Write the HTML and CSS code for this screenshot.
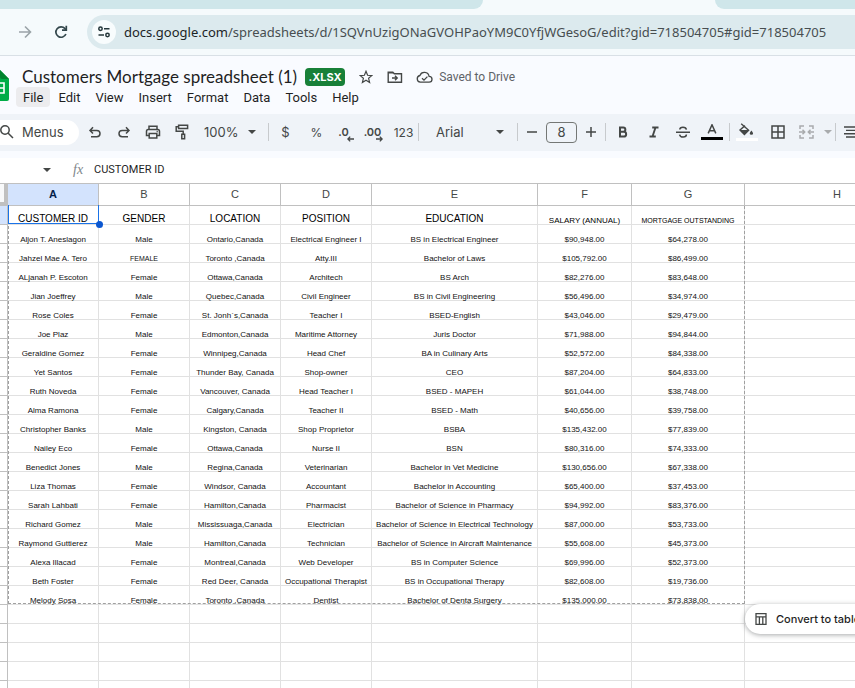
FILE: index.html
```html
<!DOCTYPE html>
<html lang="en">
<head>
    <meta charset="utf-8">
    <title>Customers Mortgage spreadsheet (1)</title>
    <link rel="stylesheet" href="styles.css">
</head>
<body>
<div class="tabs"><div class="tab-left"></div><div class="tab-right"></div></div>

<div class="browser">
    <button class="nav" aria-label="Forward"><svg width="14" height="14" viewBox="0 0 14 14" fill="none" stroke="#9aa3a8" stroke-width="1.6"><path d="M1 7h11M7 1.5L12.5 7 7 12.5"/></svg></button>
    <button class="nav reload" aria-label="Reload"><svg width="14" height="14" viewBox="0 0 14 14" fill="none" stroke="#33474c" stroke-width="1.7"><path d="M11.9 9A5.2 5.2 0 1 1 11 3.6L12.4 5"/><path d="M12.3 .8v4.4H8"/></svg></button>
    <div class="address">
        <button class="site" aria-label="Site information"><svg width="12" height="12" viewBox="0 0 12 12" fill="none" stroke="#24363a" stroke-width="1.5"><circle cx="2.5" cy="2.8" r="1.7"/><path d="M6 2.8h5.5M.5 9h5.5"/><circle cx="9.5" cy="9" r="1.7"/></svg></button>
        <a class="url" href="#"><b>docs.google.com</b>/spreadsheets/d/1SQVnUzigONaGVOHPaoYM9C0YfjWGesoG/edit?gid=718504705#gid=718504705</a>
    </div>
</div>

<header class="docs">
    <svg class="logo" width="9" height="32" viewBox="0 0 9 32"><path d="M0 0l9 9v20a2 2 0 0 1-2 2H0z" fill="#00ac47"/><path d="M0 0l9 9H2a2 2 0 0 1-2-2z" fill="#00832d"/><path d="M0 13h4v10H0M0 18h4" fill="none" stroke="#fff" stroke-width="1.6"/></svg>
    <div class="heading">
        <div class="title-row">
            <h1>Customers Mortgage spreadsheet (1)</h1>
            <span class="badge">.XLSX</span>
            <button class="icon star" aria-label="Star"><svg width="14" height="14" viewBox="0 0 14 14" fill="none" stroke="#444746" stroke-width="1.2"><path d="M7 1.3l1.6 4 4.2.3-3.2 2.7 1 4.2L7 10.2l-3.6 2.3 1-4.2L1.2 5.6l4.2-.3z"/></svg></button>
            <button class="icon" aria-label="Move"><svg width="16" height="14" viewBox="0 0 16 14" fill="none" stroke="#444746" stroke-width="1.4"><path d="M1.2 2.2h4.6l1.5 1.6h7.2v8.4H1.2z"/><path d="M1 2.8h5"/><path d="M5 8h5M8 5.8L10.2 8 8 10.2"/></svg></button>
            <button class="icon saved" aria-label="Saved to Drive"><svg width="17" height="14" viewBox="0 0 17 14" fill="none" stroke="#444746" stroke-width="1.3"><path d="M4.3 12.2a3.4 3.4 0 0 1-.4-6.7 4.8 4.8 0 0 1 9.2.9 2.9 2.9 0 0 1 0 5.8z"/><path d="M6 8.3l2 1.9 3.4-3.6"/></svg></button>
            <span class="status">Saved to Drive</span>
        </div>
        <nav class="menu">
            <button class="open">File</button>
            <button>Edit</button>
            <button>View</button>
            <button>Insert</button>
            <button>Format</button>
            <button>Data</button>
            <button>Tools</button>
            <button>Help</button>
        </nav>
    </div>
</header>

<div class="toolbar">
    <button class="menus"><svg width="14" height="14" viewBox="0 0 14 14" fill="none" stroke="#444746" stroke-width="1.5"><circle cx="5" cy="5" r="4.2"/><path d="M8 8l5 5"/></svg>Menus</button>
    <button aria-label="Undo"><svg width="14" height="14" viewBox="0 0 14 14" fill="none" stroke="#444746" stroke-width="1.5"><path d="M5 2.2L2 5.4l3 3.2M2.2 5.4h6.6a3.2 3.2 0 0 1 0 6.4H3"/></svg></button>
    <button aria-label="Redo"><svg width="14" height="14" viewBox="0 0 14 14" fill="none" stroke="#444746" stroke-width="1.5"><path d="M9 2.2l3 3.2-3 3.2M11.8 5.4H5.2a3.2 3.2 0 0 0 0 6.4H11"/></svg></button>
    <button aria-label="Print"><svg width="16" height="14" viewBox="0 0 16 14" fill="none" stroke="#444746" stroke-width="1.5"><path d="M4 4V1.2h8V4M4 10.5H1.5V6.4Q1.5 4.5 3.2 4.5h9.6q1.7 0 1.7 1.9v4.1H12"/><path d="M4.2 8.5h7.6v4.4H4.2z"/><path d="M11.6 6.6h1.2"/></svg></button>
    <button aria-label="Paint format"><svg width="14" height="16" viewBox="0 0 14 16" fill="none" stroke="#444746" stroke-width="1.5"><path d="M3.6 1.2h9v3.4h-9zM3.6 2.8H1.2v4.4h7v3"/><path d="M6.8 10.2h2.8v4.6H6.8z"/></svg></button>
    <label class="pick zoom"><select aria-label="Zoom"><option>100%</option></select><svg width="8" height="4" viewBox="0 0 8 4"><path d="M0 0h8L4 4z" fill="#444746"/></svg></label>
    <i class="sep"></i>
    <button class="first">$</button>
    <button class="pct">%</button>
    <button class="dec" aria-label="Decrease decimal places">.0<svg width="7" height="6" viewBox="0 0 7 6" fill="none" stroke="#444746" stroke-width="1.3"><path d="M7 3H1M3.2.6L.9 3l2.3 2.4"/></svg></button>
    <button class="dec" aria-label="Increase decimal places">.00<svg width="7" height="6" viewBox="0 0 7 6" fill="none" stroke="#444746" stroke-width="1.3"><path d="M0 3h6M3.8.6L6.1 3 3.8 5.4"/></svg></button>
    <button class="num">123</button>
    <i class="sep"></i>
    <label class="pick font"><select aria-label="Font"><option>Arial</option></select><svg width="8" height="4" viewBox="0 0 8 4"><path d="M0 0h8L4 4z" fill="#444746"/></svg></label>
    <i class="sep"></i>
    <button class="step" aria-label="Decrease font size"><svg width="10" height="10" viewBox="0 0 10 10"><path d="M0 5h10" stroke="#444746" stroke-width="1.5"/></svg></button>
    <input class="size" type="text" value="8" aria-label="Font size">
    <button class="step" aria-label="Increase font size"><svg width="10" height="10" viewBox="0 0 10 10"><path d="M0 5h10M5 0v10" stroke="#444746" stroke-width="1.5"/></svg></button>
    <i class="sep"></i>
    <button class="first bold" aria-label="Bold"><svg width="10" height="12" viewBox="0 0 10 12" fill="none" stroke="#444746" stroke-width="2"><path d="M2 1.5h3.2a2.1 2.1 0 0 1 0 4.3H2zM2 5.8h3.8a2.3 2.3 0 0 1 0 4.7H2z"/></svg></button>
    <button aria-label="Italic"><svg width="10" height="12" viewBox="0 0 10 12" fill="none" stroke="#444746" stroke-width="1.9"><path d="M3.2 1.5h6.3M.5 10.5h6.3M6.5 1.5l-3 9"/></svg></button>
    <button aria-label="Strikethrough"><svg width="14" height="12" viewBox="0 0 14 12" fill="none" stroke="#444746" stroke-width="1.5"><path d="M0 6.2h14M10.4 3.6C10 .4 3.8.4 3.8 3.6M3.6 8.6c.6 3.4 6.8 3.2 6.8 0"/></svg></button>
    <button class="color" aria-label="Text color"><svg width="22" height="16" viewBox="0 0 22 16" fill="none"><path d="M7.2 9.4L11 .8l3.8 8.6M8.4 6.8h5.2" stroke="#444746" stroke-width="1.5"/><path d="M0 13h22v3H0z" fill="#000"/></svg></button>
    <i class="sep"></i>
    <button class="first" aria-label="Fill color"><svg width="22" height="18" viewBox="0 0 22 18" fill="none"><path d="M5.2.8l7.4 6.4-4.2 4.2L4 7l5-4.4" stroke="#444746" stroke-width="1.4"/><path d="M4 7h8.6l-4.2 4.4z" fill="#444746"/><path d="M15.4 7.6q3.4 4.2 0 4.2t0-4.2" fill="#444746"/><path d="M0 15h22v3H0z" fill="#fff"/></svg></button>
    <button aria-label="Borders"><svg width="14" height="14" viewBox="0 0 14 14" fill="none" stroke="#444746" stroke-width="1.5"><path d="M1 1h12v12H1zM7 1v12M1 7h12"/></svg></button>
    <button aria-label="Merge cells"><svg width="15" height="14" viewBox="0 0 15 14" fill="none" stroke="#a9abad" stroke-width="1.5"><path d="M5 1H1v3M10 1h4v3M5 13H1v-3M10 13h4v-3M0 7h5M15 7h-5M3.5 4.8L5.7 7 3.5 9.2M11.5 4.8L9.3 7l2.2 2.2"/></svg></button>
    <button class="more" aria-label="Merge type"><svg width="8" height="4" viewBox="0 0 8 4"><path d="M0 0h8L4 4z" fill="#a9abad"/></svg></button>
    <i class="sep"></i>
    <button class="align" aria-label="Align"><svg width="14" height="12" viewBox="0 0 14 12" stroke="#444746" stroke-width="1.4"><path d="M0 1h14M2 4.4h10M0 7.8h14M2 11h10"/></svg></button>
</div>

<div class="formula">
    <button class="names" aria-label="Named ranges"><svg width="8" height="4" viewBox="0 0 8 4"><path d="M0 0h8L4 4z" fill="#444746"/></svg></button>
    <label class="fx" for="fx">fx</label>
    <input id="fx" type="text" value="CUSTOMER ID">
</div>

<main class="sheet">
    <table>
        <colgroup><col class="rowno"><col class="m"><col class="m"><col class="m"><col class="m"><col class="e"><col class="f"><col class="g"><col class="h"></colgroup>
        <thead>
            <tr><th class="corner"></th><th class="on">A</th><th>B</th><th>C</th><th>D</th><th>E</th><th>F</th><th>G</th><th>H</th></tr>
        </thead>
        <tbody>
            <tr class="labels"><th class="on"></th><td>CUSTOMER ID</td><td>GENDER</td><td>LOCATION</td><td>POSITION</td><td>EDUCATION</td><td class="salary">SALARY (ANNUAL)</td><td class="small">MORTGAGE OUTSTANDING</td><td></td></tr>
            <tr><th></th><td>Aljon T. Aneslagon</td><td>Male</td><td>Ontario,Canada</td><td>Electrical Engineer I</td><td>BS in Electrical Engineer</td><td>$90,948.00</td><td>$64,278.00</td><td></td></tr>
            <tr><th></th><td>Jahzel Mae A. Tero</td><td class="small">FEMALE</td><td>Toronto ,Canada</td><td>Atty.III</td><td>Bachelor of Laws</td><td>$105,792.00</td><td>$86,499.00</td><td></td></tr>
            <tr><th></th><td>ALjanah P. Escoton</td><td>Female</td><td>Ottawa,Canada</td><td>Architech</td><td>BS Arch</td><td>$82,276.00</td><td>$83,648.00</td><td></td></tr>
            <tr><th></th><td>Jian Joeffrey</td><td>Male</td><td>Quebec,Canada</td><td>Civil Engineer</td><td>BS in Civil Engineering</td><td>$56,496.00</td><td>$34,974.00</td><td></td></tr>
            <tr><th></th><td>Rose Coles</td><td>Female</td><td>St. Jonh`s,Canada</td><td>Teacher I</td><td>BSED-English</td><td>$43,046.00</td><td>$29,479.00</td><td></td></tr>
            <tr><th></th><td>Joe Plaz</td><td>Male</td><td>Edmonton,Canada</td><td>Maritime Attorney</td><td>Juris Doctor</td><td>$71,988.00</td><td>$94,844.00</td><td></td></tr>
            <tr><th></th><td>Geraldine Gomez</td><td>Female</td><td>Winnipeg,Canada</td><td>Head Chef</td><td>BA in Culinary Arts</td><td>$52,572.00</td><td>$84,338.00</td><td></td></tr>
            <tr><th></th><td>Yet Santos</td><td>Female</td><td>Thunder Bay, Canada</td><td>Shop-owner</td><td>CEO</td><td>$87,204.00</td><td>$64,833.00</td><td></td></tr>
            <tr><th></th><td>Ruth Noveda</td><td>Female</td><td>Vancouver, Canada</td><td>Head Teacher I</td><td>BSED - MAPEH</td><td>$61,044.00</td><td>$38,748.00</td><td></td></tr>
            <tr><th></th><td>Alma Ramona</td><td>Female</td><td>Calgary,Canada</td><td>Teacher II</td><td>BSED - Math</td><td>$40,656.00</td><td>$39,758.00</td><td></td></tr>
            <tr><th></th><td>Christopher Banks</td><td>Male</td><td>Kingston, Canada</td><td>Shop Proprietor</td><td>BSBA</td><td>$135,432.00</td><td>$77,839.00</td><td></td></tr>
            <tr><th></th><td>Nailey Eco</td><td>Female</td><td>Ottawa,Canada</td><td>Nurse II</td><td>BSN</td><td>$80,316.00</td><td>$74,333.00</td><td></td></tr>
            <tr><th></th><td>Benedict Jones</td><td>Male</td><td>Regina,Canada</td><td>Veterinarian</td><td>Bachelor in Vet Medicine</td><td>$130,656.00</td><td>$67,338.00</td><td></td></tr>
            <tr><th></th><td>Liza Thomas</td><td>Female</td><td>Windsor, Canada</td><td>Accountant</td><td>Bachelor in Accounting</td><td>$65,400.00</td><td>$37,453.00</td><td></td></tr>
            <tr><th></th><td>Sarah Lahbati</td><td>Female</td><td>Hamilton,Canada</td><td>Pharmacist</td><td>Bachelor of Science in Pharmacy</td><td>$94,992.00</td><td>$83,376.00</td><td></td></tr>
            <tr><th></th><td>Richard Gomez</td><td>Male</td><td>Mississuaga,Canada</td><td>Electrician</td><td>Bachelor of Science in Electrical Technology</td><td>$87,000.00</td><td>$53,733.00</td><td></td></tr>
            <tr><th></th><td>Raymond Guttierez</td><td>Male</td><td>Hamilton,Canada</td><td>Technician</td><td>Bachelor of Science in Aircraft Maintenance</td><td>$55,608.00</td><td>$45,373.00</td><td></td></tr>
            <tr><th></th><td>Alexa Illacad</td><td>Female</td><td>Montreal,Canada</td><td>Web Developer</td><td>BS in Computer Science</td><td>$69,996.00</td><td>$52,373.00</td><td></td></tr>
            <tr><th></th><td>Beth Foster</td><td>Female</td><td>Red Deer, Canada</td><td>Occupational Therapist</td><td>BS in Occupational Therapy</td><td>$82,608.00</td><td>$19,736.00</td><td></td></tr>
            <tr><th></th><td>Melody Sosa</td><td>Female</td><td>Toronto ,Canada</td><td>Dentist</td><td>Bachelor of Denta Surgery</td><td>$135,000.00</td><td>$73,838.00</td><td></td></tr>
            <tr><th></th><td></td><td></td><td></td><td></td><td></td><td></td><td></td><td></td></tr>
            <tr><th></th><td></td><td></td><td></td><td></td><td></td><td></td><td></td><td></td></tr>
            <tr><th></th><td></td><td></td><td></td><td></td><td></td><td></td><td></td><td></td></tr>
            <tr><th></th><td></td><td></td><td></td><td></td><td></td><td></td><td></td><td></td></tr>
            <tr><th></th><td></td><td></td><td></td><td></td><td></td><td></td><td></td><td></td></tr>
        </tbody>
    </table>
    <div class="range"></div>
    <div class="cursor"></div>
    <button class="convert"><svg width="12" height="12" viewBox="0 0 12 12" fill="none" stroke="#444746" stroke-width="1.3"><path d="M1 .7h10v10.6H1zM1 3.8h10M4.4 3.8v7.5M7.8 3.8v7.5"/></svg>Convert to table</button>
</main>
</body>
</html>
```
FILE: styles.css
```css
*{ margin:0; padding:0; box-sizing:border-box}
html{ height:100%}
body{
    height:100%;
    display:flex; flex-direction:column;
    overflow:hidden;
    background:#fff; color:#1f1f1f;
    font-family:Inter, "Liberation Sans", sans-serif;
}
button, input, select{
    border:0; background:none; outline:0;
    font:inherit; color:inherit;
}
button{
    display:flex; align-items:center; justify-content:center;
    white-space:nowrap; cursor:pointer;
}
svg{ display:block; flex:none}

/* browser chrome */
.tabs{
    display:flex; justify-content:space-between; flex:none;
    height:9px;
    background:#f5fafc;
}
.tab-left, .tab-right{ background:#cfe6ea}
.tab-left{ width:483px; border-bottom-right-radius:9px}
.tab-right{ width:140px; border-bottom-left-radius:9px}
.browser{
    display:flex; align-items:center; flex:none;
    height:47px; padding-left:11px;
    background:#f5fafc; border-bottom:1px solid #d9e0e6;
}
.nav{ width:28px; height:28px}
.reload{ margin:0 12px 0 8px}
.address{
    flex:1; min-width:0; height:34px;
    display:flex; align-items:center; gap:8px;
    padding-left:5px;
    background:#dceaee; border-radius:17px 0 0 17px;
}
.site{ width:24px; height:24px; flex:none; border-radius:50%; background:#f8fcfd}
.url{
    font:13px "Noto Sans", sans-serif;
    color:#474e50; text-decoration:none; white-space:nowrap;
}
.url b{ font-weight:400; color:#1b2426}

/* document header */
.docs{
    display:flex; gap:7px; flex:none;
    height:58px; padding-top:10px;
    background:#f9fbff;
}
.logo{ margin-top:4px}
.title-row{
    display:flex; align-items:center;
    height:21px; padding-left:6px;
}
.title-row h1{
    font:17px/21px Lato, sans-serif;
    white-space:nowrap;
}
.badge{
    width:40px; height:18px; margin-left:8px;
    background:#188038; border-radius:4px;
    font-size:11px; font-weight:700; line-height:18px; text-align:center; color:#fff;
}
.icon{ width:16px; height:16px; margin-left:13px}
.status{ margin-left:7px; font:12px Roboto, sans-serif; color:#5f6368}
.menu{ display:flex; gap:1px}
.menu button{
    height:20px; padding:0 7px;
    border-radius:4px; font:13px Roboto, sans-serif;
}
.menu .open{ background:#ececee}

/* toolbar */
.toolbar{
    display:flex; align-items:center; flex:none;
    height:37px; padding-bottom:1px;
    background:#eff3f8;
    font-size:13px; color:#444746;
}
.toolbar button{ width:29px; height:28px; flex:none}
.toolbar .menus{
    width:79px; height:25px; margin-right:1px;
    justify-content:flex-start; gap:8px;
    background:#fff; border-radius:0 13px 13px 0;
}
.sep{ width:1px; height:18px; flex:none; background:#c7cacd}
.pick{ display:flex; align-items:center; flex:none}
.pick select{ appearance:none; flex:1; min-width:0}
.zoom{ width:72px; padding:0 12px 0 8px}
.font{ width:98px; padding:0 13px 0 17px}
.toolbar .first{ width:33px}
.toolbar .pct, .toolbar .num{ font-size:12px}
.toolbar .dec{ padding-right:4px; font-size:11px; font-weight:600; position:relative}
.dec svg{ position:absolute; right:6px; bottom:4px}
.toolbar .step{ width:28px}
.size{
    width:31px; height:21px; flex:none;
    border:1px solid #747775; border-radius:4px;
    text-align:center;
}
.toolbar .color{ margin-right:3px}
.toolbar .more{ width:14px}
.toolbar .align{ width:30px}

/* formula bar */
.formula{
    display:flex; align-items:center; flex:none;
    height:32px; padding-bottom:2px;
    border-top:7px solid #f9fbff;
}
.names{ width:20px; height:20px; margin-left:37px}
.fx{
    width:37px; padding-left:16px;
    font:italic 14px "Liberation Serif", serif; color:#80868b;
}
#fx{ flex:1; min-width:0; font:11px Roboto, sans-serif}

/* grid */
.sheet{ position:relative; flex:1; min-height:0; overflow:hidden}
table{
    width:930px;
    table-layout:fixed; border-collapse:separate; border-spacing:0;
    border-top:1px solid #c0c0c0;
    font-family:"Liberation Sans", Arial, sans-serif;
}
.rowno{ width:8px}
.m{ width:91px}
.e{ width:166px}
.f{ width:94px}
.g{ width:113px}
.h{ width:185px}
th{ border-right:1px solid #c0c0c0; border-bottom:1px solid #c0c0c0}
thead th{
    height:22px;
    font:11px/13px "Liberation Sans", Arial, sans-serif; color:#444746;
}
th.on{ background:#d3e3fd}
thead th.on{ font-weight:700; color:#041e49}
thead .corner{ background:#f8f9fa; border-right:4px solid #c0c0c0; border-bottom:4px solid #c0c0c0}
td{
    height:19px;
    border-right:1px solid #e1e1e1; border-bottom:1px solid #e1e1e1;
    font-size:8px; line-height:6px; text-align:center; vertical-align:bottom;
    white-space:nowrap; color:#111;
}
.labels td{ font-size:10px; line-height:11px; color:#000}
.labels .salary{ font-size:8px; line-height:6px}
td.small, .labels .small{ font-size:7px; line-height:6px}

/* overlays on the grid */
.range{
    position:absolute; left:8px; top:23px;
    width:737px; height:398px;
    border:1px dashed #a0a0a0; border-top:0;
}
.cursor{
    position:absolute; left:8px; top:22px;
    width:91px; height:19px;
    border:1px solid #1a73e8; border-top:0;
}
.cursor::after{
    content:"";
    position:absolute; right:-5px; bottom:-5px;
    width:7px; height:7px;
    background:#0b57d0; border-radius:50%;
}
.convert{
    position:absolute; left:745px; top:421px;
    height:30px; padding:0 16px 0 10px; gap:9px;
    background:#fff; border-radius:15px;
    box-shadow:0 1px 5px rgba(60,64,67,.45);
    font-size:11px; font-weight:500;
}
```
